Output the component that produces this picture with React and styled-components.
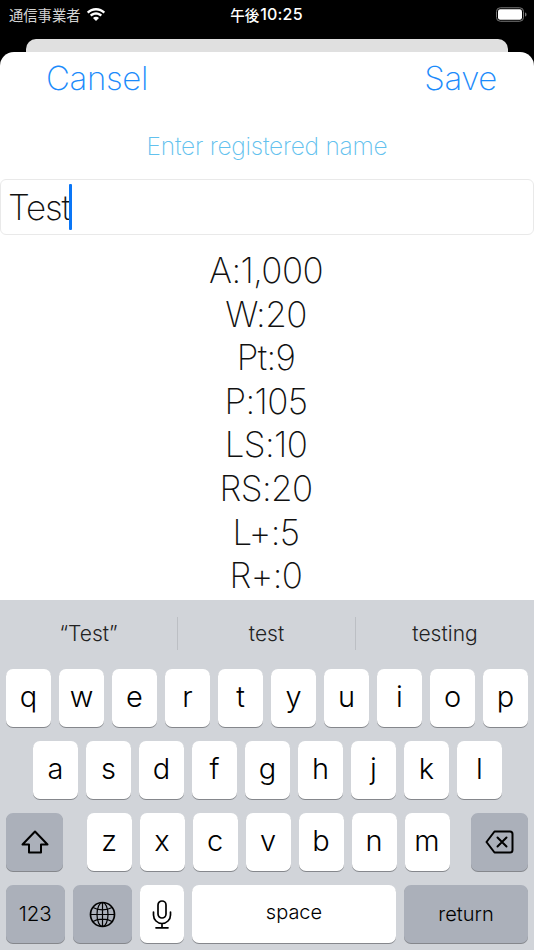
import React from "react";
import styled, { createGlobalStyle } from "styled-components";

const Global = createGlobalStyle`
  html, body { margin: 0; padding: 0; background: #000; }
  * { box-sizing: border-box; }
`;
const SANS = `Inter, "Noto Sans CJK JP", "Liberation Sans", sans-serif`;

const Page = styled.div`
  width: 534px; height: 950px; background: #000; display: flex; flex-direction: column;
  overflow: hidden; font-family: ${SANS};
`;
const StatusBar = styled.div`
  height: 39px; flex: none; display: grid; grid-template-columns: 1fr auto 1fr; align-items: start;
  padding: 5px 7px 0 9px; color: #fff;
`;
const Carrier = styled.div`
  display: flex; align-items: center; gap: 6px; font-size: 14.3px; line-height: 19px; color: #d4d4d4;
  font-family: "Noto Sans CJK JP", sans-serif;
`;
const Clock = styled.div`
  display: flex; align-items: center; gap: 1px; line-height: 19px; font-weight: 500; font-size: 14.5px;
  font-family: "Noto Sans CJK JP", sans-serif; margin-left: -3px;
`;
const ClockDigits = styled.span`
  font-family: Inter, sans-serif; font-size: 16px; font-weight: 500; letter-spacing: 0.2px;
`;
const BatteryWrap = styled.div`justify-self: end; height: 19px; display: flex; align-items: center;`;
const BackCard = styled.div`
  height: 13px; flex: none; margin: 0 26px; background: #e0e0e0; border-radius: 10px 10px 0 0;
`;
const Sheet = styled.div`
  flex: 1; background: #fff; border-radius: 14px 14px 0 0; display: flex; flex-direction: column; min-height: 0;
`;
const NavRow = styled.div`
  display: flex; justify-content: space-between; padding: 5px 37px 0 46px; height: 59px;
`;
const NavButton = styled.div`
  color: #1c8bfb; font-size: 33px; line-height: 43px; font-weight: 200; letter-spacing: -0.35px;
`;
const Hint = styled.div`
  margin-top: 15px; text-align: center; color: #62c1ee; font-size: 24.5px; line-height: 40px; font-weight: 200;
  letter-spacing: -0.25px;
`;
const NameField = styled.div`
  margin-top: 13px; height: 56px; border: 1px solid #e9e9e9; border-radius: 6px; padding-left: 7px;
  display: flex; align-items: center; font-size: 35px; font-weight: 200; color: #111; letter-spacing: -1.2px;
`;
const Caret = styled.span`
  width: 2.5px; height: 46px; background: #0a76f6; border-radius: 1px; margin-left: -0.5px;
`;
const Specs = styled.div`
  margin-top: 14px; padding-right: 2px; text-align: center; font-size: 35px; line-height: 43.6px;
  font-weight: 200; color: #111; letter-spacing: -0.6px;
`;
const Keyboard = styled.div`
  height: 350px; flex: none; background: #d1d4d9; display: flex; flex-direction: column;
`;
const Suggestions = styled.div`
  height: 69px; flex: none; display: grid; grid-template-columns: repeat(3, 1fr); padding-top: 17px;
`;
const Suggestion = styled.div`
  height: 33px; display: flex; align-items: center; justify-content: center; font-size: 21px; color: #222;
  font-weight: 350;
  &:not(:last-child) { border-right: 1px solid #bcbfc4; }
`;
const Row = styled.div`
  height: 58px; flex: none; margin-bottom: 14px; display: flex; gap: ${p => p.$gap ?? 8}px;
  padding: 0 ${p => p.$pad ?? 6}px; justify-content: ${p => p.$between ? "space-between" : "flex-start"};
`;
const Key = styled.div`
  width: ${p => p.$w ?? 45}px; flex: none; height: 58px; border-radius: 7px;
  background: ${p => p.$dark ? "#abb0ba" : "#fff"}; box-shadow: 0 1px 0 #85878c;
  display: flex; align-items: center; justify-content: center; color: #000;
  font-weight: 350;
  font-size: ${p => p.$size ?? 29}px; line-height: 1; padding-bottom: ${p => p.$lift ?? 4}px;
`;
const Letters = styled.div`display: flex; gap: 8px; margin-left: 2px;`;

const Wifi = () => (
  <svg width="20" height="16" viewBox="0 0 20 15" fill="#fff">
    <path d="M10 2.900c2.900 0 5.500 1.100 7.500 3l1.600-1.700C16.700 1.900 13.500.5 10 .5S3.300 1.900.9 4.200l1.600 1.700c2-1.900 4.600-3 7.500-3z" />
    <path d="M10 7.200c1.700 0 3.200.6 4.400 1.700l1.700-1.700C14.500 5.700 12.400 4.800 10 4.800S5.500 5.700 3.900 7.200l1.700 1.700C6.800 7.800 8.300 7.200 10 7.200z" />
    <path d="M10 9.200c-1.200 0-2.200.4-3 1.200l3 3.200 3-3.200c-.8-.8-1.800-1.200-3-1.200z" />
  </svg>
);
const Battery = () => (
  <svg width="31" height="15" viewBox="0 0 31 15">
    <rect x="0.500" y="0.750" width="27" height="13.500" rx="3.800" fill="none" stroke="#777" />
    <rect x="2" y="2.250" width="24" height="10.500" rx="2.200" fill="#fff" />
    <path d="M29 5.500c1 .3 1.500 1 1.500 2s-.5 1.700-1.500 2z" fill="#777" />
  </svg>
);
const Shift = () => (
  <svg width="28" height="25" viewBox="0 0 28 25" fill="none" stroke="#000" strokeWidth="2" strokeLinejoin="round">
    <path d="M14 1.500 1.500 14.500H8v8h12v-8h6.500z" />
  </svg>
);
const Backspace = () => (
  <svg width="29" height="24" viewBox="0 0 29 24" fill="none" stroke="#000" strokeWidth="2" strokeLinejoin="round" strokeLinecap="round">
    <path d="M9.500 1.500H25a2.500 2.500 0 0 1 2.500 2.500v16a2.500 2.500 0 0 1-2.500 2.500H9.500L1.500 12z" />
    <path d="m12.500 7.500 9 9m0-9-9 9" />
  </svg>
);
const GlobeIcon = () => (
  <svg width="27" height="27" viewBox="0 0 27 27" fill="none" stroke="#000" strokeWidth="1.200">
    <circle cx="13.500" cy="13.500" r="12" strokeWidth="1.700" />
    <ellipse cx="13.500" cy="13.500" rx="5.500" ry="12" />
    <path d="M13.500 1.500v24M1.500 13.500h24M4 6.500c2.600 1.500 5.900 2.300 9.500 2.300s6.900-.8 9.500-2.300M4 20.500c2.600-1.500 5.900-2.300 9.500-2.300s6.900.8 9.500 2.300" />
  </svg>
);
const Mic = () => (
  <svg width="20" height="29" viewBox="0 0 20 29" fill="none" stroke="#000" strokeWidth="1.700" strokeLinecap="round">
    <rect x="6" y="1" width="8" height="17" rx="4" />
    <path d="M1.500 12v3a8.500 8.500 0 0 0 17 0v-3M10 23.500V27.500M4 27.800h12" />
  </svg>
);

const SPECS = ["A:1,000", "W:20", "Pt:9", "P:105", "LS:10", "RS:20", "L+:5", "R+:0"];

export default function App() {
  return (
    <Page>
      <Global />
      <StatusBar>
        <Carrier>通信事業者<Wifi /></Carrier>
        <Clock>午後<ClockDigits>10:25</ClockDigits></Clock>
        <BatteryWrap><Battery /></BatteryWrap>
      </StatusBar>
      <BackCard />
      <Sheet>
        <NavRow>
          <NavButton>Cansel</NavButton>
          <NavButton>Save</NavButton>
        </NavRow>
        <Hint>Enter registered name</Hint>
        <NameField>Test<Caret /></NameField>
        <Specs>{SPECS.map(s => <div key={s}>{s}</div>)}</Specs>
      </Sheet>
      <Keyboard>
        <Suggestions>
          <Suggestion>“Test”</Suggestion>
          <Suggestion>test</Suggestion>
          <Suggestion>testing</Suggestion>
        </Suggestions>
        <Row>{"qwertyuiop".split("").map(k => <Key key={k}>{k}</Key>)}</Row>
        <Row $pad={33}>{"asdfghjkl".split("").map(k => <Key key={k}>{k}</Key>)}</Row>
        <Row $between>
          <Key $dark $w={57} $lift={0}><Shift /></Key>
          <Letters>{"zxcvbnm".split("").map(k => <Key key={k}>{k}</Key>)}</Letters>
          <Key $dark $w={57} $lift={0}><Backspace /></Key>
        </Row>
        <Row>
          <Key $dark $w={58.500} $size={20.500} $lift={0}>123</Key>
          <Key $dark $w={59} $lift={0}><GlobeIcon /></Key>
          <Key $w={44.500} $lift={0}><Mic /></Key>
          <Key $w={204} $size={20} $lift={4}>space</Key>
          <Key $dark $w={124} $size={20} $lift={0}>return</Key>
        </Row>
      </Keyboard>
    </Page>
  );
}
